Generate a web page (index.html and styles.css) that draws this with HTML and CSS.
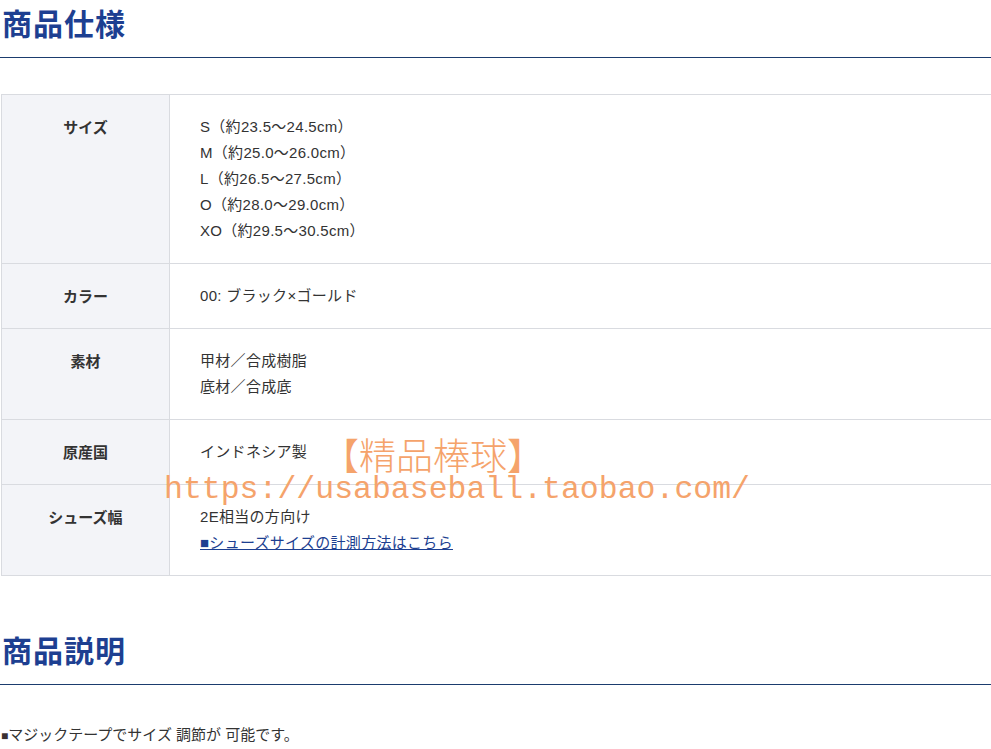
FILE: index.html
```html
<!DOCTYPE html>
<html lang="ja">
<head>
<meta charset="utf-8">
<link rel="stylesheet" href="styles.css">
</head>
<body>
<div class="page">
  <section class="section">
    <h2 class="heading">商品仕様</h2>
    <div class="spec">
      <div class="row">
        <div class="label">サイズ</div>
        <div class="value">S（約23.5〜24.5cm）<br>M（約25.0〜26.0cm）<br>L（約26.5〜27.5cm）<br>O（約28.0〜29.0cm）<br>XO（約29.5〜30.5cm）</div>
      </div>
      <div class="row">
        <div class="label">カラー</div>
        <div class="value">00: ブラック×ゴールド</div>
      </div>
      <div class="row">
        <div class="label">素材</div>
        <div class="value">甲材／合成樹脂<br>底材／合成底</div>
      </div>
      <div class="row">
        <div class="label">原産国</div>
        <div class="value">インドネシア製</div>
      </div>
      <div class="row">
        <div class="label">シューズ幅</div>
        <div class="value">2E相当の方向け<br><a class="link" href="#">■シューズサイズの計測方法はこちら</a></div>
      </div>
    </div>
  </section>
  <section class="section section-desc">
    <h2 class="heading">商品説明</h2>
    <p class="desc"><span class="sq">■</span>マジックテープでサイズ 調節が 可能です。</p>
  </section>
  <div class="wm-title">【精品棒球】</div>
  <div class="wm-url">https://usabaseball.taobao.com/</div>
</div>
</body>
</html>
```
FILE: styles.css
```css
html, body {
  margin: 0;
  padding: 0;
  background: #ffffff;
  overflow: hidden;
}
.page {
  position: relative;
  font-family: "Liberation Sans", "Noto Sans CJK JP", sans-serif;
  color: #333333;
  font-size: 15px;
}
.heading {
  margin: 0;
  padding: 0 0 12px 2px;
  font-family: "Noto Sans CJK JP", sans-serif;
  font-size: 30px;
  line-height: 45px;
  font-weight: 700;
  color: #1d3f91;
  border-bottom: 1px solid #1b3c6e;
  letter-spacing: 1px;
}
.spec {
  margin: 36px 0 0 1px;
  border-top: 1px solid #d9dbe0;
  border-left: 1px solid #d9dbe0;
}
.row {
  display: grid;
  grid-template-columns: 168px 1fr;
  border-bottom: 1px solid #d9dbe0;
}
.label {
  background: #f3f4f8;
  border-right: 1px solid #d9dbe0;
  text-align: center;
  font-family: "Noto Sans CJK JP", sans-serif;
  font-weight: 700;
  color: #333333;
  padding: 19px 0;
  line-height: 26px;
}
.value {
  padding: 19px 0 19px 30px;
  line-height: 26px;
  color: #333333;
  letter-spacing: 0.3px;
}
.link {
  color: #1d3f91;
  text-decoration: underline;
}
.section-desc {
  margin-top: 51px;
}
.desc {
  margin: 37px 0 0 0;
  padding-left: 1px;
  line-height: 26px;
  color: #333333;
}
.sq {
  color: #3a3030;
  font-size: 12px;
}
.wm-title {
  position: absolute;
  left: 322px;
  top: 431px;
  font-family: "Noto Sans CJK SC", sans-serif;
  font-weight: 300;
  font-size: 37px;
  line-height: 46px;
  color: #f5a36b;
}
.wm-url {
  position: absolute;
  left: 164px;
  top: 470px;
  font-family: "Liberation Mono", monospace;
  font-size: 31.5px;
  line-height: 40px;
  color: #f5a36b;
}
```
